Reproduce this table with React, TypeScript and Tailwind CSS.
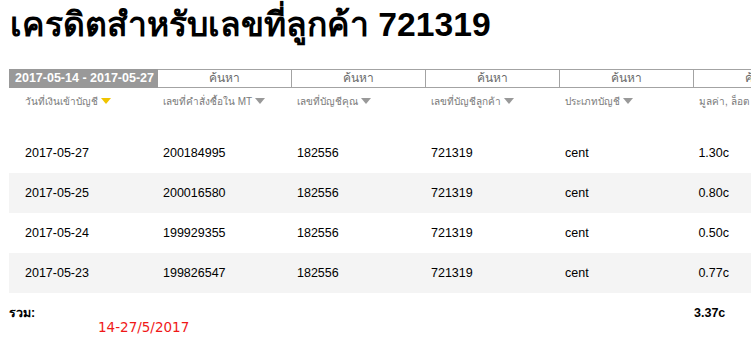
import React from 'react';

const rows = [
  { date: '2017-05-27', order: '200184995', acc: '182556', client: '721319', type: 'cent', value: '1.30c' },
  { date: '2017-05-25', order: '200016580', acc: '182556', client: '721319', type: 'cent', value: '0.80c' },
  { date: '2017-05-24', order: '199929355', acc: '182556', client: '721319', type: 'cent', value: '0.50c' },
  { date: '2017-05-23', order: '199826547', acc: '182556', client: '721319', type: 'cent', value: '0.77c' },
];

const headers = ['เลขที่คำสั่งซื้อใน MT', 'เลขที่บัญชีคุณ', 'เลขที่บัญชีลูกค้า', 'ประเภทบัญชี', 'มูลค่า, ล็อต'];

function Caret({ active }: { active?: boolean }) {
  return (
    <span
      className={`ml-[3px] inline-block w-0 h-0 border-l-[5px] border-r-[5px] border-t-[6px] border-l-transparent border-r-transparent ${
        active ? 'border-t-[#f0c400]' : 'border-t-[#999999]'
      }`}
    />
  );
}

export default function App() {
  return (
    <div className="w-[751px] h-[347px] overflow-hidden bg-white relative font-['Liberation_Sans',Arial,sans-serif] text-black">
      {/* TITLE */}
      <h1 className="pl-[10px] pt-[4px] h-[69px] text-[33.7px] leading-[40px] font-bold">
        เครดิตสำหรับเลขที่ลูกค้า 721319
      </h1>

      <div className="ml-[9px] w-[960px]">
        {/* FILTERS */}
        <div className="flex h-[19px] border-y border-[#a3a3a3]">
          <div className="w-[149px] -my-px h-[19px] bg-[#999999] text-white font-bold text-[12.5px] leading-[19px] pl-[6px]">
            2017-05-14 - 2017-05-27
          </div>
          {[0, 1, 2, 3, 4].map((i) => (
            <div
              key={i}
              className="w-[134px] border-r border-[#a3a3a3] text-center text-[12px] leading-[17px] text-[#6b6b6b]"
            >
              ค้นหา
            </div>
          ))}
        </div>

        {/* HEADERS */}
        <div className="flex h-[26px] items-center text-[10px] text-[#7a7a7a]">
          <div className="w-[149px] pl-[16px] flex items-center">
            วันที่เงินเข้าบัญชี
            <Caret active />
          </div>
          {headers.map((h, i) => (
            <div key={h} className="w-[134px] pl-[5px] flex items-center">
              {h}
              {i < 4 && <Caret />}
            </div>
          ))}
        </div>
        <div className="h-[19px]" />

        {/* ROWS */}
        {rows.map((r, i) => (
          <div
            key={r.date}
            className={`flex h-[40px] items-center text-[12.5px] ${i % 2 === 1 ? 'bg-[#f4f4f4]' : ''}`}
          >
            <div className="w-[149px] pl-[16px]">{r.date}</div>
            <div className="w-[134px] pl-[5px]">{r.order}</div>
            <div className="w-[134px] pl-[5px]">{r.acc}</div>
            <div className="w-[134px] pl-[5px]">{r.client}</div>
            <div className="w-[134px] pl-[5px]">{r.type}</div>
            <div className="w-[134px]">
              <div className="w-[35px] text-right">{r.value}</div>
            </div>
          </div>
        ))}

        {/* TOTAL */}
        <div className="flex h-[40px] items-center text-[12.5px] font-bold">
          <div className="w-[685px]">รวม:</div>
          <div className="w-[31px] text-right">3.37c</div>
        </div>
      </div>

      <span className="absolute left-[98px] top-[318px] text-[13.5px] leading-[18px] text-[#f01818] font-['DejaVu_Sans',sans-serif]">
        14-27/5/2017
      </span>
    </div>
  );
}
